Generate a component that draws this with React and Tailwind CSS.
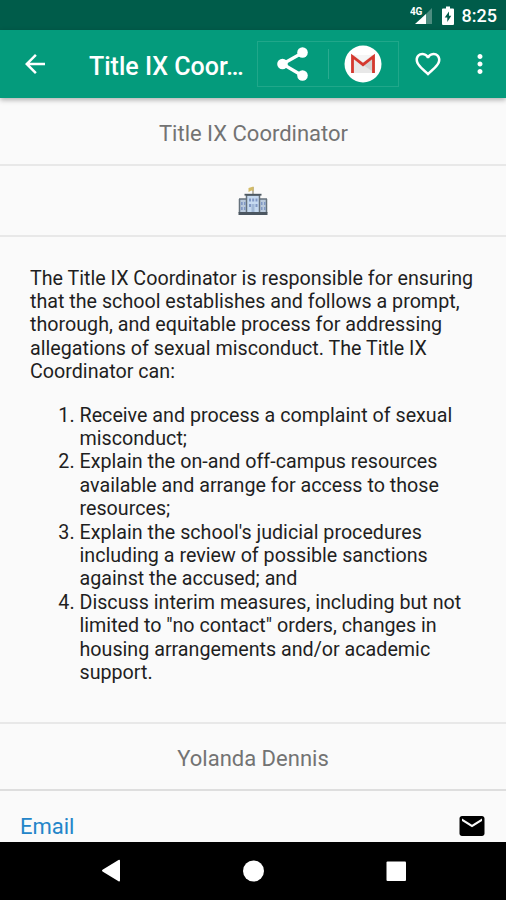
import React from 'react'

const duties = [
  ['Receive and process a complaint of sexual', 'misconduct;'],
  ['Explain the on-and off-campus resources', 'available and arrange for access to those', 'resources;'],
  ["Explain the school's judicial procedures", 'including a review of possible sanctions', 'against the accused; and'],
  ['Discuss interim measures, including but not', 'limited to "no contact" orders, changes in', 'housing arrangements and/or academic', 'support.'],
]

const intro = [
  'The Title IX Coordinator is responsible for ensuring',
  'that the school establishes and follows a prompt,',
  'thorough, and equitable process for addressing',
  'allegations of sexual misconduct. The Title IX',
  'Coordinator can:',
]

function Lines({ lines }) {
  return lines.map(line => (
    <span key={line} className="block whitespace-nowrap">{line}</span>
  ))
}

function StatusBar() {
  return (
    <div className="flex h-[30px] shrink-0 items-center justify-end bg-[#005c4a] pr-[9px] text-white">
      <svg className="mr-[9px] h-[20px] w-[23px]" viewBox="0 0 23 20">
        <path d="M22 3v16H6z" fill="#fff" fillOpacity="0.3" />
        <path d="M16 9v10H5z" fill="#fff" />
        <text x="0" y="9.500" fill="#fff" fontSize="10" fontWeight="700" letterSpacing="-0.3" fontFamily="Roboto, sans-serif">4G</text>
      </svg>
      <svg className="mr-[8px] h-[19px] w-[12px]" viewBox="0 0 12 19">
        <path d="M4 0.5h4v2h3a1 1 0 0 1 1 1V18a1 1 0 0 1-1 1H1a1 1 0 0 1-1-1V3.500a1 1 0 0 1 1-1h3z" fill="#fff" />
        <path d="M7 5.500 2.700 11.500h2.600V16l4-6.200H7z" fill="#005c4a" />
      </svg>
      <span className="pt-[2px] text-[18px] leading-none font-medium">8:25</span>
    </div>
  )
}

function GmailLogo() {
  return (
    <svg className="h-[38px] w-[38px]" viewBox="0 0 38 38">
      <circle cx="19" cy="19" r="18.500" fill="#fff" />
      <path d="M7 10h24v18H7z" fill="#e8e8e8" />
      <path d="M19 20l12 8V11z" fill="#d4d4d4" />
      <path d="M10 10h18l-9 7.500z" fill="#f5f5f5" />
      <path d="M8.500 28V11.500L19 19.700l10.500-8.200V28" fill="none" stroke="#d5392f" strokeWidth="2.800" />
    </svg>
  )
}

function AppBar() {
  return (
    <header className="z-10 flex h-[68px] shrink-0 items-center bg-[#049b7c] text-white shadow-[0_2px_5px_rgba(0,0,0,0.3)]">
      <svg className="ml-[20px] h-[30px] w-[30px]" viewBox="0 0 24 24" fill="currentColor">
        <path d="M20 11H7.830l5.590-5.590L12 4l-8 8 8 8 1.410-1.410L7.830 13H20v-2z" />
      </svg>
      <h1 className="ml-[39px] w-[168px] pt-[5px] text-[25px] leading-none font-medium whitespace-nowrap">Title IX Coor…</h1>
      <div className="flex h-[46px] w-[142px] items-center border border-[#20a78a]">
        <div className="flex w-[70px] justify-center">
          <svg className="h-[40px] w-[40px]" viewBox="0 0 40 40" fill="currentColor">
            <path d="M30 8.500 9.500 20 30 32" fill="none" stroke="currentColor" strokeWidth="3.200" />
            <circle cx="29.500" cy="8.500" r="5.300" />
            <circle cx="9.500" cy="20" r="5.300" />
            <circle cx="29.500" cy="31.500" r="5.300" />
          </svg>
        </div>
        <div className="h-[30px] w-px bg-[#2aab90]" />
        <div className="flex flex-1 justify-center pr-[1px]"><GmailLogo /></div>
      </div>
      <svg className="ml-[14px] h-[30px] w-[30px]" viewBox="0 0 24 24" fill="currentColor">
        <path d="M16.500 3c-1.740 0-3.410.81-4.500 2.090C10.910 3.810 9.240 3 7.500 3 4.420 3 2 5.420 2 8.500c0 3.780 3.400 6.860 8.550 11.540L12 21.350l1.450-1.320C18.600 15.360 22 12.280 22 8.500 22 5.420 19.580 3 16.500 3zm-4.400 15.550-.1.100-.1-.1C7.140 14.240 4 11.390 4 8.500 4 6.500 5.500 5 7.500 5c1.540 0 3.040.99 3.570 2.360h1.870C13.460 5.990 14.960 5 16.500 5c2 0 3.500 1.500 3.500 3.500 0 2.890-3.140 5.740-7.900 10.050z" />
      </svg>
      <svg className="ml-[22px] h-[30px] w-[30px]" viewBox="0 0 24 24" fill="currentColor">
        <path d="M12 8c1.100 0 2-.9 2-2s-.9-2-2-2-2 .9-2 2 .9 2 2 2zm0 2c-1.100 0-2 .9-2 2s.9 2 2 2 2-.9 2-2-.9-2-2-2zm0 6c-1.100 0-2 .9-2 2s.9 2 2 2 2-.9 2-2-.9-2-2-2z" />
      </svg>
    </header>
  )
}

function SchoolIcon() {
  return (
    <svg className="h-[30px] w-[30px]" viewBox="0 0 30 30">
      <path d="M15 1v8" stroke="#8f8a76" strokeWidth="1.200" />
      <path d="M10.500 2 15.500 .5v4.500l-2-.5-3 1.500z" fill="#d3bb66" />
      <path d="M1 13h28v14H1z" fill="#b9c9dc" />
      <path d="M1 13h28M1.500 13v14M28.500 13v14" stroke="#66727c" strokeWidth="1.500" />
      <path d="M8.500 9h13v18h-13z" fill="#c6daf0" stroke="#66727c" strokeWidth="1.500" />
      <path d="M6.500 8.700h17" stroke="#4d5962" strokeWidth="1.800" />
      <path d="M11 12.500h2v3h-2zM14.200 12.500h2v3h-2zM17.500 12.500h2v3h-2zM11 18h2v3h-2zM17.500 18h2v3h-2zM3 16h1.700v3H3zM6 16h1.500v3H6zM23 16h1.500v3H23zM26 16h1.500v3H26zM3 21h1.700v3H3zM6 21h1.500v3H6zM23 21h1.500v3H23zM26 21h1.500v3H26z" fill="#8299c5" />
      <path d="M13.500 18h3v8h-3z" fill="#a1b8d6" />
      <path d="M0.500 26h29v3h-29z" fill="#4b5660" />
    </svg>
  )
}

function NavBar() {
  return (
    <nav className="flex h-[58px] shrink-0 items-center bg-black">
      <svg className="h-[24px] w-full" viewBox="0 0 506 24" fill="#fff">
        <path d="M120 1.500v20a1 1 0 0 1-1.500.7l-16-9.800a1 1 0 0 1 0-1.600l16-9.800a1 1 0 0 1 1.500.5z" />
        <circle cx="253.500" cy="12" r="10.500" />
        <rect x="386.500" y="2.500" width="19.500" height="19.500" rx="1" />
      </svg>
    </nav>
  )
}

export default function App() {
  return (
    <div className="flex h-[900px] w-[506px] flex-col overflow-hidden bg-[#fafafa] font-['Roboto',sans-serif]">
      <StatusBar />
      <AppBar />
      <main className="flex min-h-0 flex-1 flex-col">
        <h2 className="flex h-[68px] shrink-0 items-center justify-center border-b-2 border-[#e8e8e8] pt-[4px] pl-[1px] text-[22px] text-[#737373]">Title IX Coordinator</h2>
        <div className="flex h-[71px] shrink-0 items-center justify-center border-b-2 border-[#e8e8e8]">
          <SchoolIcon />
        </div>
        <section className="h-[487px] shrink-0 border-b-2 border-[#e8e8e8] pt-[29.6px] pl-[30px] text-[19.7px] leading-[23.4px] text-[#1f1f1f]">
          <p><Lines lines={intro} /></p>
          <ol className="mt-[20px] list-decimal pl-[49.5px]">
            {duties.map(lines => (
              <li key={lines[0]}><Lines lines={lines} /></li>
            ))}
          </ol>
        </section>
        <h2 className="flex h-[67px] shrink-0 items-center justify-center border-b-2 border-[#dedede] pt-[3px] text-[22px] text-[#737373]">Yolanda Dennis</h2>
        <div className="flex items-start justify-between pt-[20px] pr-[19px] pl-[20px]">
          <a className="mt-[2px] text-[22px] leading-[28px] text-[#2385c9]">Email</a>
          <svg className="h-[30px] w-[30px]" viewBox="0 0 24 24">
            <path d="M20 4H4c-1.100 0-1.990.9-1.990 2L2 18c0 1.100.9 2 2 2h16c1.100 0 2-.9 2-2V6c0-1.100-.9-2-2-2zm0 4-8 5-8-5V6l8 5 8-5v2z" />
          </svg>
        </div>
      </main>
      <NavBar />
    </div>
  )
}
